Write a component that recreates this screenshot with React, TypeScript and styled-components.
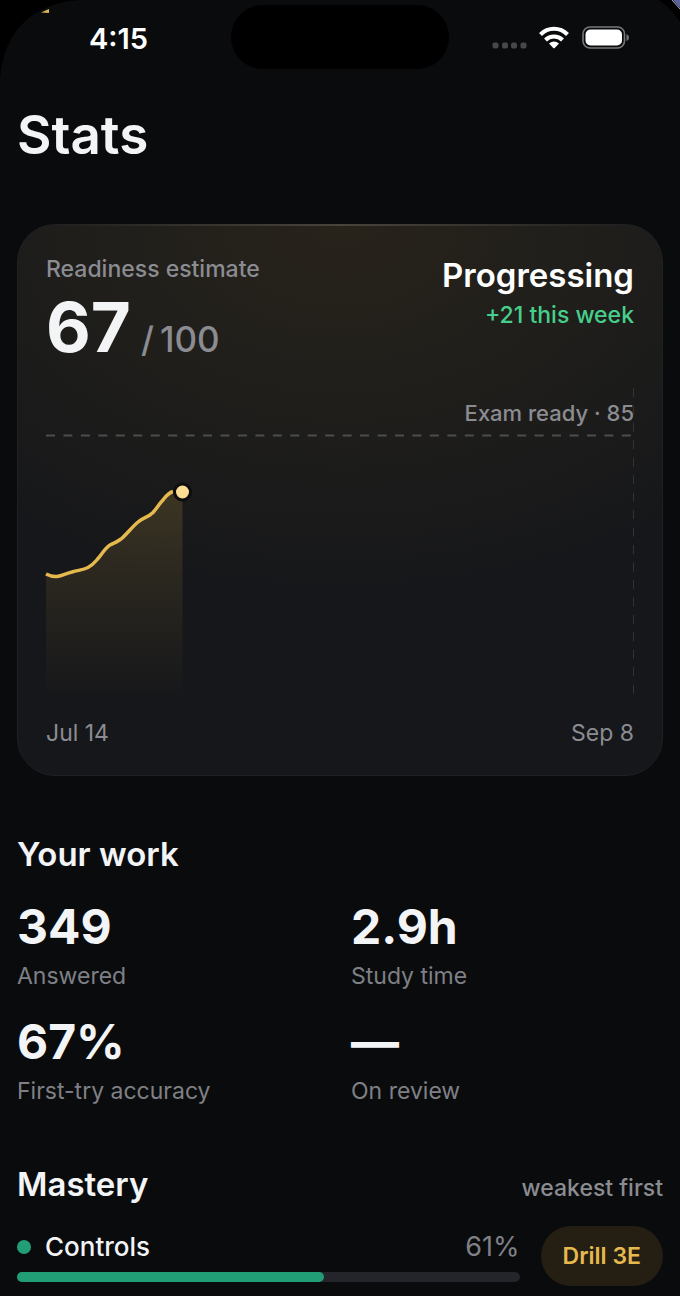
import React from "react";
import styled, { createGlobalStyle } from "styled-components";

const GlobalStyle = createGlobalStyle`
  *, *::before, *::after { box-sizing: border-box; }
  body {
    margin: 0;
    background: #0a0b0d;
    color: #f3f4f6;
    font-family: Inter, "Liberation Sans", sans-serif;
    -webkit-font-smoothing: antialiased;
  }
  h1, h2, p, dl, dt, dd { margin: 0; }
`;

const Screen = styled.div`
  position: relative;
  overflow: hidden;
`;

const Corner = styled.svg<{ $side: "left" | "right" }>`
  position: absolute;
  top: 0;
  ${(p) => p.$side}: 0;
  display: block;
`;

const StatusBar = styled.header`
  position: relative;
  display: grid;
  grid-template-columns: 1fr 218px 1fr;
  align-items: center;
  padding-top: 5px;
`;

const Clock = styled.time`
  justify-self: center;
  padding: 3px 0 0 6px;
  font-size: 29px;
  line-height: 32px;
  font-weight: 600;
  color: #fff;
`;

const Island = styled.div`
  height: 64px;
  border-radius: 32px;
  background: #000;
`;

const StatusIcons = styled.div`
  justify-self: end;
  padding: 2px 50px 0 0;
  display: flex;
  align-items: center;
`;

const Content = styled.main`
  padding: 0 17px 10px;
`;

const Title = styled.h1`
  margin-top: 34px;
  font-size: 53px;
  line-height: 64px;
  font-weight: 600;
`;

const Card = styled.section`
  position: relative;
  margin-top: 57px;
  padding: 29px 28px 27px;
  border: 1px solid #1f2023;
  border-radius: 38px;
  background: radial-gradient(ellipse 540px 370px at 50% 0, #28231b 0%, #1f1e1b 50%, rgba(22, 23, 26, 0) 100%), #16171a;

  &::before {
    content: "";
    position: absolute;
    top: -1px;
    left: 30px;
    right: 30px;
    height: 2px;
    background: linear-gradient(90deg, transparent, #48443c 50%, transparent);
  }
`;

const CardHead = styled.div`
  display: flex;
  justify-content: space-between;
`;

const TrendColumn = styled.div`
  text-align: right;
`;

const Label = styled.p`
  font-size: 23px;
  line-height: 30px;
  font-weight: 500;
  color: #8b8c91;
`;

const Score = styled.p`
  display: flex;
  align-items: baseline;
  gap: 10px;
  font-size: 69px;
  line-height: 86px;
  font-weight: 700;
`;

const OutOf = styled.span`
  display: flex;
  gap: 6px;
  font-size: 35px;
  font-weight: 500;
  color: #8b8c91;
`;

const Trend = styled.p`
  font-size: 33px;
  line-height: 42px;
  font-weight: 600;
  color: #fff;
`;

const Delta = styled(Label)`
  margin-top: 4px;
  color: #46cf8b;
`;

const Chart = styled.div`
  position: relative;
  margin-top: 6px;
`;

const ChartSvg = styled.svg`
  display: block;
  width: 100%;
  height: auto;
  overflow: visible;
`;

const TargetLabel = styled(Label)`
  position: absolute;
  top: 10px;
  right: 0;
  font-size: 22px;
`;

const DateAxis = styled.div`
  display: flex;
  justify-content: space-between;
  margin-top: 20px;
`;

const DateLabel = styled(Label)`
  font-weight: 400;
`;

const SectionTitle = styled.h2`
  font-size: 33px;
  line-height: 42px;
  font-weight: 600;
`;

const Work = styled.section`
  margin-top: 57px;
`;

const StatGrid = styled.dl`
  display: grid;
  grid-template-columns: 1fr 1fr;
  column-gap: 22px;
  row-gap: 17px;
  margin-top: 20px;
`;

const Stat = styled.div`
  display: flex;
  flex-direction: column-reverse;
`;

const StatName = styled.dt`
  font-size: 23px;
  line-height: 34px;
  color: #7f8085;
`;

const StatValue = styled.dd`
  font-size: 48px;
  line-height: 64px;
  font-weight: 700;
`;

const Mastery = styled.section`
  margin-top: 55px;
`;

const MasteryHead = styled.div`
  display: flex;
  justify-content: space-between;
  align-items: baseline;
`;

const Topic = styled.div`
  display: flex;
  align-items: center;
  gap: 21px;
  margin-top: 21px;
`;

const TopicBody = styled.div`
  flex: 1;
`;

const TopicLine = styled.div`
  display: flex;
  align-items: center;
  gap: 14px;
  margin-bottom: 8px;
  line-height: 34px;
`;

const Dot = styled.span`
  width: 14px;
  height: 14px;
  border-radius: 50%;
  background: #229e76;
`;

const TopicName = styled.span`
  flex: 1;
  font-size: 26px;
  font-weight: 500;
`;

const Percent = styled.span`
  font-size: 27px;
  color: #7f8085;
`;

const Track = styled.div`
  height: 10px;
  border-radius: 5px;
  background: #24252a;
`;

const Fill = styled.div`
  height: 10px;
  border-radius: 5px;
  background: #229e76;
`;

const DrillButton = styled.button`
  height: 60px;
  padding: 0 22px;
  border: 0;
  border-radius: 30px;
  background: #241e13;
  color: #e6b94f;
  font-family: inherit;
  font-size: 23px;
  font-weight: 600;
  cursor: pointer;
`;

const stats = [
  { name: "Answered", value: "349" },
  { name: "Study time", value: "2.9h" },
  { name: "First-try accuracy", value: "67%" },
  { name: "On review", value: "—" },
];

const topics = [{ name: "Controls", percent: 61, action: "Drill 3E" }];

const curve =
  "M0,186 C4,188 7,189 11,188.5 C16,188 20,185.5 26,184 C33,182 37,182 42,179.5 C47,177 49,174 52,170.5 C56,166 59,160 64,157 C68,155 71,154 75,151 C81,146 86,139 92,134 C97,129.5 102,129.5 107,124.5 C111,120 113,116 117,112 C120,108 122,105 127,103.5";

const StatusGlyphs = () => (
  <svg width="138" height="26" viewBox="0 0 138 26" role="img" aria-label="No signal, Wi-Fi, battery full">
    <g fill="#47484a">
      <rect x="0.500" y="17.500" width="6" height="6" rx="2" />
      <rect x="10" y="17.500" width="6" height="6" rx="2" />
      <rect x="19" y="17.500" width="6" height="6" rx="2" />
      <rect x="28.500" y="17.500" width="6" height="6" rx="2" />
    </g>
    <g fill="none" stroke="#fff" strokeWidth="4">
      <path d="M48.500 9.500 C56 1.800 68 1.800 75.500 9.500" />
      <path d="M53.500 15 C58 10.400 66 10.400 70.500 15" />
    </g>
    <path d="M57 18.500 Q62 14.500 67 18.500 L62.700 23 Q62 23.600 61.300 23 Z" fill="#fff" />
    <rect x="91" y="2" width="41.500" height="21" rx="7" fill="none" stroke="#77787a" strokeWidth="1.600" />
    <rect x="93.500" y="4.500" width="36.500" height="16" rx="5" fill="#fff" />
    <path d="M134.500 9 Q137 10 137 12.500 Q137 15 134.500 16 Z" fill="#77787a" />
  </svg>
);

const ReadinessChart = () => (
  <Chart>
    <ChartSvg viewBox="0 0 588 310" role="img" aria-label="Readiness from Jul 14 to Sep 8">
      <defs>
        <linearGradient id="area" x1="0" y1="103" x2="0" y2="310" gradientUnits="userSpaceOnUse">
          <stop offset="0" stopColor="#e6b94f" stopOpacity="0.17" />
          <stop offset="1" stopColor="#e6b94f" stopOpacity="0" />
        </linearGradient>
      </defs>
      <line x1="0" y1="47.500" x2="588" y2="47.500" stroke="#4c4d4d" strokeWidth="2" strokeDasharray="9 8.450" />
      <line x1="587.500" y1="0" x2="587.500" y2="306" stroke="#323335" strokeDasharray="9 8.450" />
      <path d={`${curve} L136.500,103 L136.500,310 L0,310 Z`} fill="url(#area)" />
      <path d={curve} fill="none" stroke="#e6b94f" strokeWidth="3.500" />
      <circle cx="136.500" cy="104" r="8" fill="#fbdc94" stroke="#0d0d0e" strokeWidth="3" />
    </ChartSvg>
    <TargetLabel>Exam ready · 85</TargetLabel>
  </Chart>
);

export default function App() {
  return (
    <Screen>
      <GlobalStyle />
      <Corner $side="left" width="80" height="80" viewBox="0 0 80 80" aria-hidden="true">
        <path d="M0 0 H80 C32 3 3 32 0 80 Z" fill="#000" />
        <path d="M41 12.500 L49 9 V13 Z" fill="#d9b45c" />
      </Corner>
      <Corner $side="right" width="24" height="24" viewBox="0 0 24 24" aria-hidden="true">
        <path d="M3 0 H24 V22 Q15 8 3 0 Z" fill="#000" />
        <path d="M17 0 H24 V8 Z" fill="#5a639c" />
        <path d="M16 0 L24 9" stroke="#a9adc0" strokeWidth="1" />
      </Corner>
      <StatusBar>
        <Clock>4:15</Clock>
        <Island />
        <StatusIcons>
          <StatusGlyphs />
        </StatusIcons>
      </StatusBar>
      <Content>
        <Title>Stats</Title>
        <Card>
          <CardHead>
            <div>
              <Label>Readiness estimate</Label>
              <Score>
                67
                <OutOf>
                  <span>/</span>
                  <span>100</span>
                </OutOf>
              </Score>
            </div>
            <TrendColumn>
              <Trend>Progressing</Trend>
              <Delta>+21 this week</Delta>
            </TrendColumn>
          </CardHead>
          <ReadinessChart />
          <DateAxis>
            <DateLabel>Jul 14</DateLabel>
            <DateLabel>Sep 8</DateLabel>
          </DateAxis>
        </Card>
        <Work>
          <SectionTitle>Your work</SectionTitle>
          <StatGrid>
            {stats.map((s) => (
              <Stat key={s.name}>
                <StatName>{s.name}</StatName>
                <StatValue>{s.value}</StatValue>
              </Stat>
            ))}
          </StatGrid>
        </Work>
        <Mastery>
          <MasteryHead>
            <SectionTitle>Mastery</SectionTitle>
            <Label>weakest first</Label>
          </MasteryHead>
          {topics.map((t) => (
            <Topic key={t.name}>
              <TopicBody>
                <TopicLine>
                  <Dot />
                  <TopicName>{t.name}</TopicName>
                  <Percent>{t.percent}%</Percent>
                </TopicLine>
                <Track role="progressbar" aria-label={t.name} aria-valuenow={t.percent} aria-valuemin={0} aria-valuemax={100}>
                  <Fill style={{ width: `${t.percent}%` }} />
                </Track>
              </TopicBody>
              <DrillButton type="button">{t.action}</DrillButton>
            </Topic>
          ))}
        </Mastery>
      </Content>
    </Screen>
  );
}
